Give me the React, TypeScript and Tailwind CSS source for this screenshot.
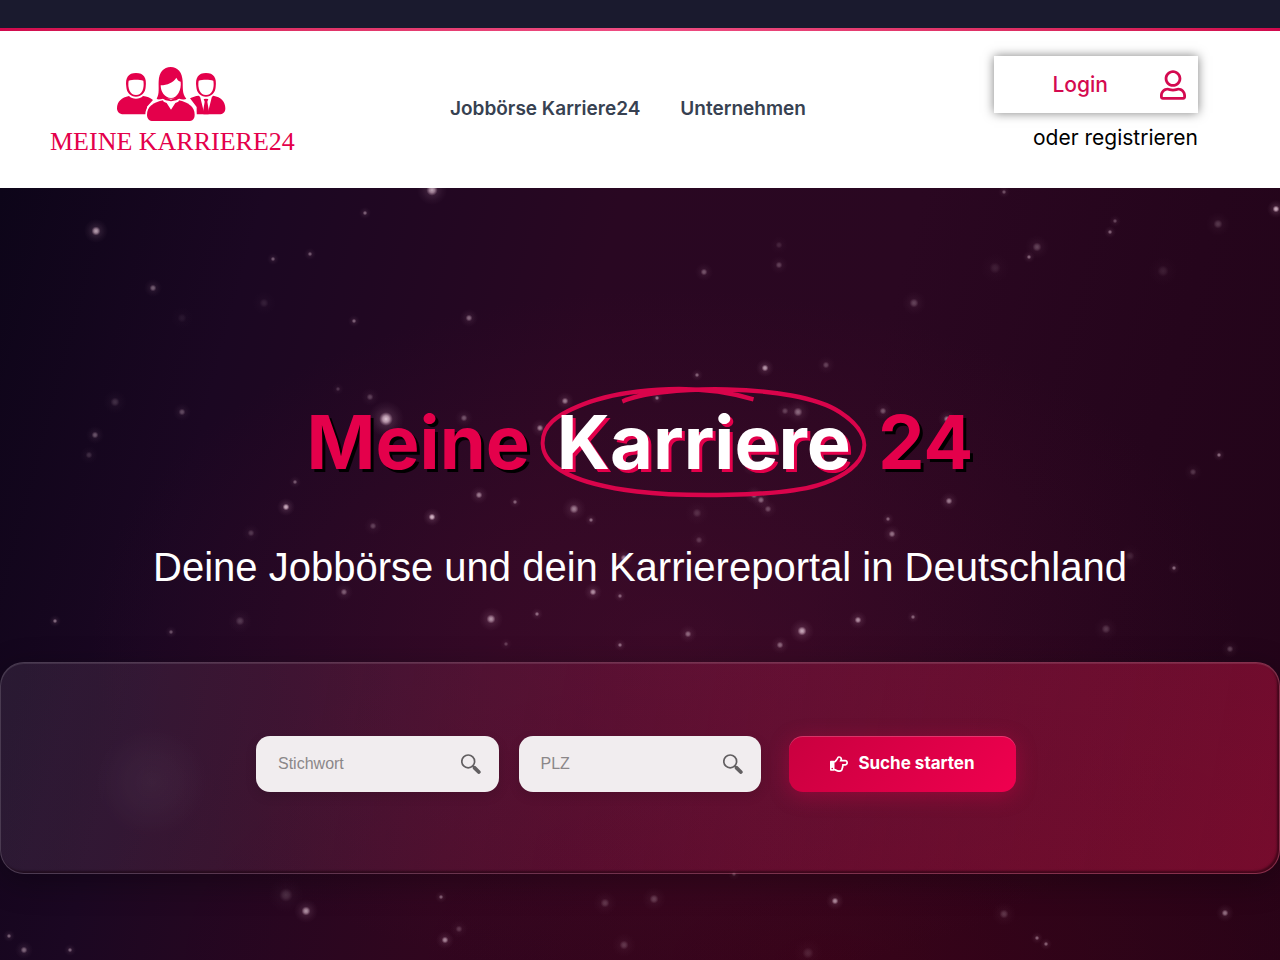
import { FaRegHandPointRight, FaRegUser } from "react-icons/fa"

// x, y, radius, opacity
const stars: [number, number, number, number][] = [
  [432, 2, 5, 0.75], [365, 25, 2, 0.5], [96, 43, 4, 0.75], [273, 71, 2, 0.45], [310, 66, 2, 0.45],
  [153, 100, 3, 0.45], [354, 133, 2, 0.5], [469, 130, 3, 0.5], [264, 115, 4, 0.12], [182, 130, 4, 0.08],
  [338, 201, 2, 0.25], [370, 209, 3, 0.3], [386, 231, 6, 0.9], [464, 230, 3, 0.4], [540, 240, 3, 0.6],
  [565, 213, 3, 0.6], [115, 214, 4, 0.2], [182, 224, 3, 0.35], [95, 247, 3, 0.4], [89, 267, 3, 0.2],
  [295, 294, 2, 0.45], [286, 319, 3, 0.85], [432, 329, 3, 0.9], [479, 307, 3, 0.6], [515, 314, 2, 0.5],
  [574, 321, 4, 0.6], [591, 332, 2, 0.55], [373, 338, 3, 0.3], [251, 345, 3, 0.25], [624, 370, 3, 0.6],
  [1004, 4, 2, 0.4], [1276, 21, 3, 0.85], [1115, 33, 2, 0.35], [1110, 44, 2, 0.5], [1218, 36, 4, 0.25],
  [1037, 59, 4, 0.3], [1029, 69, 2, 0.5], [779, 57, 3, 0.15], [779, 77, 3, 0.3], [995, 80, 5, 0.12],
  [704, 84, 3, 0.4], [914, 115, 4, 0.3], [1163, 83, 5, 0.12], [765, 180, 3, 0.75], [697, 187, 2, 0.5],
  [826, 177, 3, 0.3], [657, 210, 2, 0.6], [785, 223, 3, 0.3], [798, 224, 4, 0.5], [883, 223, 3, 0.4],
  [947, 231, 3, 0.6], [1219, 267, 2, 0.55], [1193, 284, 3, 0.25], [949, 313, 3, 0.6], [754, 307, 3, 0.5],
  [761, 312, 3, 0.5], [768, 321, 3, 0.35], [697, 325, 4, 0.2], [888, 331, 2, 0.5], [892, 346, 3, 0.55],
  [699, 352, 3, 0.25], [1174, 380, 2, 0.55], [1130, 368, 4, 0.15], [751, 278, 3, 0.5],
  [344, 404, 3, 0.45], [593, 404, 3, 0.7], [620, 408, 2, 0.5], [55, 433, 2, 0.55], [491, 431, 4, 0.7],
  [537, 426, 2, 0.55], [171, 444, 2, 0.4], [240, 433, 4, 0.25], [688, 446, 3, 0.5], [620, 457, 2, 0.55],
  [506, 456, 2, 0.3], [802, 443, 4, 0.8], [858, 432, 3, 0.7], [913, 429, 2, 0.5], [780, 457, 3, 0.5],
  [1106, 441, 4, 0.25], [1230, 461, 3, 0.3], [306, 723, 4, 0.7], [286, 707, 6, 0.2], [441, 709, 2, 0.5],
  [445, 752, 3, 0.65], [459, 741, 3, 0.25], [605, 715, 4, 0.25], [654, 711, 4, 0.3], [835, 713, 3, 0.7],
  [1004, 726, 4, 0.25], [1225, 725, 3, 0.55], [1037, 750, 2, 0.5], [1046, 756, 2, 0.5], [9, 748, 2, 0.5],
  [24, 762, 3, 0.5], [70, 762, 2, 0.5], [624, 757, 4, 0.25], [808, 765, 5, 0.15], [734, 686, 2, 0.35],
]

function Starfield() {
  return (
    <svg className="absolute inset-0 h-full w-full" viewBox="0 0 1280 772" preserveAspectRatio="xMidYMin slice" aria-hidden="true">
      <defs>
        <radialGradient id="star">
          <stop offset="0" stopColor="#f3dbe8" />
          <stop offset="0.18" stopColor="#e6c4d6" stopOpacity="0.8" />
          <stop offset="0.38" stopColor="#d4a6c0" stopOpacity="0.16" />
          <stop offset="0.7" stopColor="#d4a6c0" stopOpacity="0.06" />
          <stop offset="1" stopColor="#d4a6c0" stopOpacity="0" />
        </radialGradient>
        <radialGradient id="haze">
          <stop offset="0" stopColor="#fff" stopOpacity="0.05" />
          <stop offset="0.5" stopColor="#fff" stopOpacity="0.03" />
          <stop offset="1" stopColor="#fff" stopOpacity="0" />
        </radialGradient>
      </defs>
      {stars.map(([x, y, r, o]) => (
        <circle key={`${x}-${y}`} cx={x} cy={y} r={r * 3} opacity={o} fill="url(#star)" />
      ))}
      <circle cx="152" cy="594" r="56" fill="url(#haze)" />
    </svg>
  )
}

function Logo() {
  return (
    <a href="#" className="flex flex-col items-start text-[#e4004b]">
      <span className="flex w-[242px] justify-center">
        <svg className="h-[57px] w-[112px]" viewBox="224 30 336 171" fill="currentColor" aria-hidden="true">
          {/* left */}
          <path d="M258 96C254 68 264 54 287 54s33 14 29 42c-1 17-13 29-29 29s-28-12-29-29Z" />
          <path d="M265 77c12-4 32-4 44 0 4 22-4 43-22 43s-26-21-22-43Z" fill="#fff" />
          <path d="M266 123c10 11 32 11 42 0 12 2 22 5 30 12l-18 20v23h-70c-14 0-20-8-20-18 0-20 14-33 36-37Z" />
          {/* right */}
          <path d="M468 96c-4-28 6-42 29-42s33 14 29 42c-1 17-13 29-29 29s-28-12-29-29Z" />
          <path d="M475 77c12-4 32-4 44 0 4 22-4 43-22 43s-26-21-22-43Z" fill="#fff" />
          <path d="M475 122c12 12 32 12 44 0 23 4 36 17 36 38 0 12-7 18-19 18h-67v-22l-20-26c8-4 16-7 26-8Z" />
          <path d="m479 124 18 7 18-7-13 52h-10Z" fill="#fff" />
          <path d="m490 132h14l-3 8 6 36-3 2h-14l-3-2 6-36Z" />
          {/* middle */}
          <path d="M349 131c9-13 5-35 6-52 1-27 15-43 36-43s35 16 36 43c1 17-2 39 11 52-14 7-78 7-89 0Z" />
          <path d="M361 91c20-1 38-8 47-23 3 7 7 10 13 12 3 25-10 49-29 49s-31-19-31-38Z" fill="#fff" />
          <path
            d="M369 136c-30 6-49 19-49 43 0 12 7 19 18 19h106c13 0 19-7 19-19 0-24-20-37-48-43Z"
            stroke="#fff"
            strokeWidth="10"
            paintOrder="stroke"
          />
          <path d="m366 131 26 5 26-5-4 9-9 4-13 20-13-20-9-4Z" fill="#fff" />
          <path d="m364 129 14 0 14 5 13-5 14 0-11 7-16 3-16-3Z" />
        </svg>
      </span>
      <span className="mt-2 font-['Liberation_Serif',serif] text-[26px] leading-6 whitespace-nowrap">MEINE KARRIERE24</span>
    </a>
  )
}

function Header() {
  return (
    <header className="grid grid-cols-[400px_1fr_204px] items-center bg-white py-[25px] pr-[82px] pl-[50px]">
      <Logo />
      <nav className="flex gap-10 text-[19px] font-semibold whitespace-nowrap text-[#374151]">
        <a href="#">Jobbörse Karriere24</a>
        <a href="#">Unternehmen</a>
      </nav>
      <div className="flex flex-col items-end gap-[10px] pb-[10px] text-[21px] leading-[30px] text-black">
        <a href="#" className="flex h-[57px] w-full items-center justify-end gap-[52px] pr-3 font-medium text-[#d40a50] shadow-[0_0_10px_rgba(0,0,0,0.5)]">
          <span>Login</span>
          <FaRegUser className="h-[30px] w-[26px]" />
        </a>
        <a href="#" className="whitespace-nowrap">oder registrieren</a>
      </div>
    </header>
  )
}

function SearchField({ label }: { label: string }) {
  return (
    <label className="flex h-14 min-w-0 flex-1 items-center rounded-[14px] bg-[#f1edef] pr-[18px] pl-[22px] shadow-[0_4px_12px_rgba(0,0,0,0.12)]">
      <input
        type="text"
        placeholder={label}
        aria-label={label}
        className="min-w-0 flex-1 bg-transparent font-['Liberation_Sans',Arial,sans-serif] text-base text-gray-700 outline-none placeholder:text-[#8b8789]"
      />
      <svg className="h-5 w-5" viewBox="0 0 20 20" fill="none" stroke="#625f61" aria-hidden="true">
        <circle cx="7.2" cy="7.4" r="6.4" strokeWidth="1.7" />
        <path d="m11.6 11.8 2.2 2.1" strokeWidth="1.8" />
        <path d="m13.6 13.8 4.2 4.2" strokeWidth="3.8" strokeLinecap="round" />
      </svg>
    </label>
  )
}

function Search() {
  return (
    <div className="relative rounded-3xl border border-white/15 bg-[linear-gradient(100deg,rgba(110,90,120,0.24)_0%,rgba(125,55,90,0.27)_22%,rgba(150,30,75,0.34)_45%,rgba(170,25,70,0.44)_70%,rgba(190,20,65,0.52)_100%)] bg-origin-border px-5 pt-[73px] pb-[81px] shadow-[0_8px_32px_rgba(0,0,0,0.3),inset_0_1px_0_rgba(255,255,255,0.1),inset_-2px_-2px_2px_rgba(20,0,10,0.5)]">
      <form className="mx-auto flex w-3/5 min-w-[768px] gap-5 pr-2" onSubmit={(e) => e.preventDefault()}>
        <SearchField label="Stichwort" />
        <SearchField label="PLZ" />
        <button
          type="submit"
          className="ml-2 flex h-14 w-[227px] items-center justify-center gap-[10px] rounded-[14px] bg-linear-135 from-[#c9003f] to-[#f0004f] text-[17px] font-bold text-white shadow-[0_4px_20px_rgba(228,0,75,0.35),inset_0_1px_0_rgba(255,255,255,0.2)]"
        >
          <FaRegHandPointRight className="h-[18px] w-[18px]" />
          Suche starten
        </button>
      </form>
    </div>
  )
}

export default function App() {
  return (
    <div className="flex min-h-screen flex-col font-[Inter,'Open_Sans',sans-serif]">
      <div className="h-7 bg-[#1a1a2e]" />
      <div className="h-[3px] bg-linear-to-r from-[#d1084d] via-[#ef4d83] to-[#d1084d]" />
      <Header />

      <main className="relative flex-1 overflow-hidden bg-[radial-gradient(ellipse_45%_45%_at_52%_58%,rgba(90,15,50,0.36),transparent),radial-gradient(ellipse_60%_45%_at_65%_100%,rgba(75,0,18,0.45),transparent),linear-gradient(105deg,#0d0519_0%,#1b0722_18%,#290722_42%,#2a0721_62%,#25051c_82%,#220418_100%)] text-center">
        <Starfield />

        <h1 className="relative mt-[210px] flex justify-center gap-[27px] text-[74px] leading-[88px] font-bold text-[#e4004b] [text-shadow:3px_3px_0_#000]">
          <span>Meine</span>
          <span className="relative text-white [text-shadow:3px_3px_0_#e4004b]">
            <svg
              className="absolute top-1/2 left-1/2 h-[112px] w-[calc(100%+36px)] -translate-x-1/2 -translate-y-1/2 overflow-visible"
              viewBox="0 0 500 150"
              preserveAspectRatio="none"
              fill="none"
              stroke="#d9044b"
              strokeWidth="6"
              aria-hidden="true"
            >
              <path d="M325,18C228.7-8.3,118.5,8.3,78,21C22.4,38.4,4.6,54.6,5.6,77.6c1.4,32.4,52.2,54,142.6,63.7c66.2,7.1,212.2,7.5,273.5-8.3c64.4-16.6,104.3-57.6,33.8-98.2C386.7-4.9,179.4-1.4,126.3,20.7" />
            </svg>
            <span className="relative">Karriere</span>
          </span>
          <span>24</span>
        </h1>

        <p className="relative mt-[51px] mb-[65px] font-['Liberation_Sans',Arial,sans-serif] text-[40px] leading-[60px] text-white">
          Deine Jobbörse und dein Karriereportal in Deutschland
        </p>

        <Search />
      </main>
    </div>
  )
}
